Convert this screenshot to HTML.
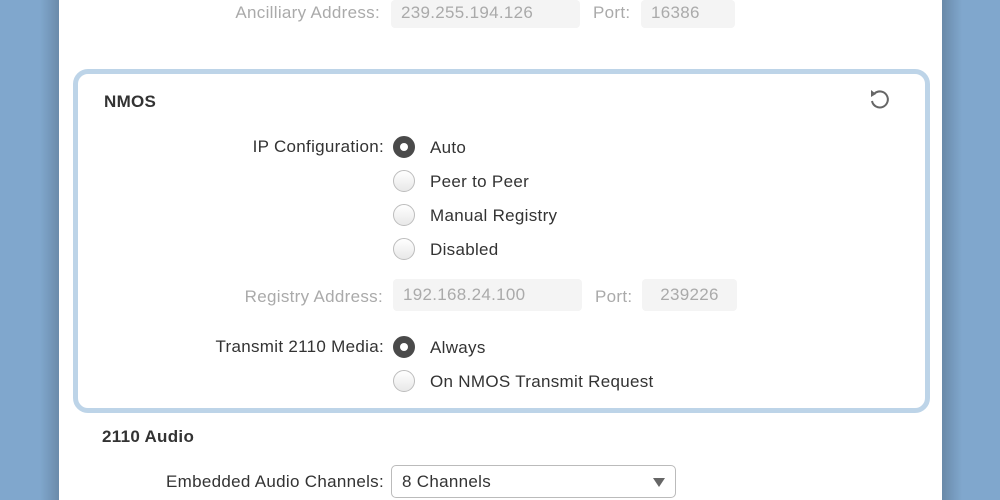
<!DOCTYPE html>
<html><head><style>
*{margin:0;padding:0;box-sizing:border-box}
body{width:1000px;height:500px;overflow:hidden;background:#80a7cd;font-family:"Liberation Sans",sans-serif;position:relative;color:#333}
.shl{position:absolute;left:40px;top:0;width:20px;height:500px;background:linear-gradient(90deg,rgba(0,0,0,0),rgba(0,0,0,.18))}
.shr{position:absolute;left:942px;top:0;width:20px;height:500px;background:linear-gradient(90deg,rgba(0,0,0,.18),rgba(0,0,0,0))}
.panel{position:absolute;left:59px;top:0;width:883px;height:500px;background:#fff}
.t{position:absolute;font-size:17px;white-space:nowrap;line-height:20px;letter-spacing:0.3px}
.g{color:#aaa}
.r{text-align:right}
.inp{position:absolute;background:#f4f4f4;border-radius:4px;color:#aaa;font-size:17px;line-height:20px;padding:6px 10px;letter-spacing:0.3px}
.box{position:absolute;left:73px;top:69px;width:857px;height:344px;border:5px solid #bdd4e8;border-radius:15px}
.rad{position:absolute;width:22px;height:22px;border-radius:50%;border:1px solid #bdbdbd;background:linear-gradient(#fff,#e8e8e8)}
.rad.on{background:#4a4a4a;border-color:#4a4a4a}
.rad.on::after{content:"";position:absolute;left:6px;top:6px;width:8px;height:8px;border-radius:50%;background:#fff}
.h{position:absolute;font-weight:bold;font-size:17px;color:#333;letter-spacing:0.3px}
.sel{position:absolute;left:391px;top:465px;width:285px;height:33px;border:1px solid #bbb;border-radius:5px;background:#fff;font-size:17px;padding:6px 10px;line-height:20px;letter-spacing:0.3px}
.sel::after{content:"";position:absolute;right:10px;top:12px;border-left:6px solid transparent;border-right:6px solid transparent;border-top:9px solid #666}
</style></head><body>
<div class="shl"></div><div class="shr"></div>
<div class="panel"></div>
<div class="t g r" style="right:620px;top:3px">Ancilliary Address:</div>
<div class="inp" style="left:391px;top:0;width:189px;height:28px;padding-top:3px">239.255.194.126</div>
<div class="t g" style="left:593px;top:3px">Port:</div>
<div class="inp" style="left:641px;top:0;width:94px;height:28px;padding-top:3px">16386</div>
<div class="box"></div>
<div class="h" style="left:104px;top:92px">NMOS</div>
<svg style="position:absolute;left:866px;top:86px" width="26" height="26" viewBox="0 0 26 26"><path d="M8.5 7.5 A8 8 0 1 1 6 15" fill="none" stroke="#666" stroke-width="2"/><path d="M5 4 L10 8 L5 11 Z" fill="#666"/></svg>
<div class="t r" style="right:616px;top:137px">IP Configuration:</div>
<div class="rad on" style="left:393px;top:136px"></div><div class="t" style="left:430px;top:138px">Auto</div>
<div class="rad" style="left:393px;top:170px"></div><div class="t" style="left:430px;top:172px">Peer to Peer</div>
<div class="rad" style="left:393px;top:204px"></div><div class="t" style="left:430px;top:206px">Manual Registry</div>
<div class="rad" style="left:393px;top:238px"></div><div class="t" style="left:430px;top:240px">Disabled</div>
<div class="t g r" style="right:617px;top:287px">Registry Address:</div>
<div class="inp" style="left:393px;top:279px;width:189px;height:32px">192.168.24.100</div>
<div class="t g" style="left:595px;top:287px">Port:</div>
<div class="inp" style="left:642px;top:279px;width:95px;height:32px;text-align:center">239226</div>
<div class="t r" style="right:616px;top:337px">Transmit 2110 Media:</div>
<div class="rad on" style="left:393px;top:336px"></div><div class="t" style="left:430px;top:338px">Always</div>
<div class="rad" style="left:393px;top:370px"></div><div class="t" style="left:430px;top:372px">On NMOS Transmit Request</div>
<div class="h" style="left:102px;top:427px">2110 Audio</div>
<div class="t r" style="right:616px;top:472px">Embedded Audio Channels:</div>
<div class="sel">8 Channels</div>
</body></html>
